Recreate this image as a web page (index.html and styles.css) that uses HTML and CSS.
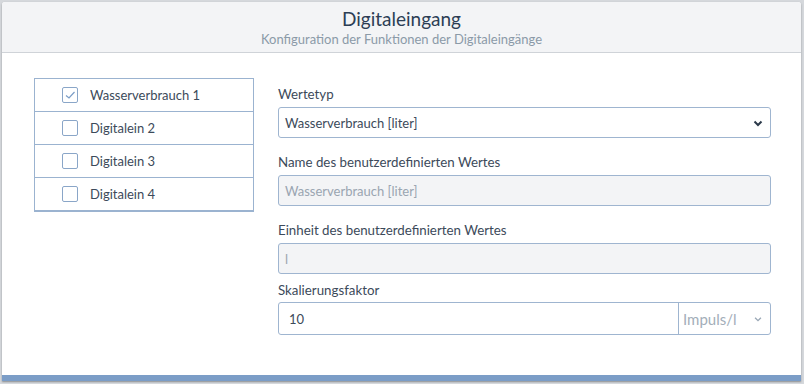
FILE: index.html
```html
<!DOCTYPE html>
<html lang="de">
<head>
    <meta charset="UTF-8">
    <title>Digitaleingang</title>
    <link rel="stylesheet" href="styles.css">
</head>
<body>
    <div class="card">
        <div class="card-header">
            <h2>Digitaleingang</h2>
            <div class="subtitle">Konfiguration der Funktionen der Digitaleingänge</div>
        </div>

        <div class="card-body">
            <ul class="input-list">
                <li class="input-item">
                    <span class="check checked">
                        <svg width="12" height="12" viewBox="0 0 12 12"><path d="M2 6.5 L5 9 L10.5 3" fill="none" stroke="#7b9dc7" stroke-width="1.2"/></svg>
                    </span>
                    <span>Wasserverbrauch 1</span>
                </li>
                <li class="input-item"><span class="check"></span><span>Digitalein 2</span></li>
                <li class="input-item"><span class="check"></span><span>Digitalein 3</span></li>
                <li class="input-item"><span class="check"></span><span>Digitalein 4</span></li>
            </ul>

            <div class="form">
                <div class="form-group">
                    <label>Wertetyp</label>
                    <div class="control select">
                        <span>Wasserverbrauch [liter]</span>
                        <svg class="caret" width="12" height="12" viewBox="0 0 12 12"><path d="M2.5 4.5 L6 8 L9.5 4.5" fill="none" stroke="#2c3a4a" stroke-width="2"/></svg>
                    </div>
                </div>
                <div class="form-group">
                    <label>Name des benutzerdefinierten Wertes</label>
                    <div class="control disabled">Wasserverbrauch [liter]</div>
                </div>
                <div class="form-group tight">
                    <label>Einheit des benutzerdefinierten Wertes</label>
                    <div class="control disabled">l</div>
                </div>
                <div class="form-group last">
                    <label>Skalierungsfaktor</label>
                    <div class="input-group">
                        <div class="group-value">10</div>
                        <div class="group-unit">
                            <span>Impuls/l</span>
                            <svg width="10" height="10" viewBox="0 0 12 12"><path d="M2.5 4.5 L6 8 L9.5 4.5" fill="none" stroke="#9aa8b6" stroke-width="1.6"/></svg>
                        </div>
                    </div>
                </div>
            </div>
        </div>
        <div class="card-footer"></div>
    </div>
</body>
</html>
```

FILE: styles.css
```css
* {
    margin: 0;
    padding: 0;
    box-sizing: border-box;
}

body {
    font-family: Lato, "Open Sans", sans-serif;
    background: #d5d8dc;
    padding: 2px 3px 2px 2px;
    color: #3c4a5a;
}

.card {
    background: white;
    box-shadow: 0 1px 2px rgba(0, 0, 0, 0.35);
    border-radius: 3px 3px 0 0;
}

.card-header {
    background: #f3f4f6;
    border-bottom: 1px solid #cfd3d8;
    height: 51px;
    text-align: center;
    padding-top: 6px;
    border-radius: 3px 3px 0 0;
}

.card-header h2 {
    font-weight: 400;
    font-size: 19px;
    line-height: 22px;
    color: #2c3e55;
}

.subtitle {
    font-size: 13px;
    line-height: 18px;
    color: #8b9aa8;
}

.card-body {
    display: grid;
    grid-template-columns: 220px 1fr;
    gap: 24px;
    padding: 25px 30px 40px 32px;
    align-items: start;
}

.input-list {
    list-style: none;
    border: 1px solid #9bb3d0;
    border-bottom-width: 2px;
}

.input-item {
    display: flex;
    align-items: center;
    height: 33px;
    padding-left: 27px;
    gap: 12px;
    font-size: 13px;
    border-top: 1px solid #9bb3d0;
}

.input-item:first-child {
    border-top: none;
    height: 32px;
}

.check {
    width: 16px;
    height: 16px;
    border: 1px solid #8aa6c8;
    border-radius: 2px;
    display: flex;
    align-items: center;
    justify-content: center;
}

.form {
    padding-top: 6px;
}

.form-group {
    margin-bottom: 14px;
}

.form-group.tight {
    margin-bottom: 6px;
}

.form-group.last {
    margin-bottom: 0;
}

.form-group label {
    display: block;
    font-size: 13.3px;
    line-height: 20px;
    margin-bottom: 3px;
    color: #3c4a5a;
}

.form-group.last label {
    margin-bottom: 2px;
}

.control {
    height: 31px;
    border: 1px solid #9fb5d0;
    border-radius: 3px;
    padding: 0 6px;
    font-size: 13px;
    display: flex;
    align-items: center;
}

.select {
    justify-content: space-between;
}

.disabled {
    background: #f3f4f6;
    color: #9aa5b1;
}

.input-group {
    display: flex;
    height: 33px;
    border: 1px solid #9fb5d0;
    border-radius: 3px;
    font-size: 13px;
}

.group-value {
    flex: 1;
    display: flex;
    align-items: center;
    padding-left: 10px;
}

.group-unit {
    width: 92px;
    border-left: 1px solid #9fb5d0;
    display: flex;
    align-items: center;
    justify-content: space-between;
    padding: 0 7px 0 4px;
    color: #a3aeb9;
    font-size: 15px;
}

.card-footer {
    height: 6px;
    background: #7b9dc7;
}
```
